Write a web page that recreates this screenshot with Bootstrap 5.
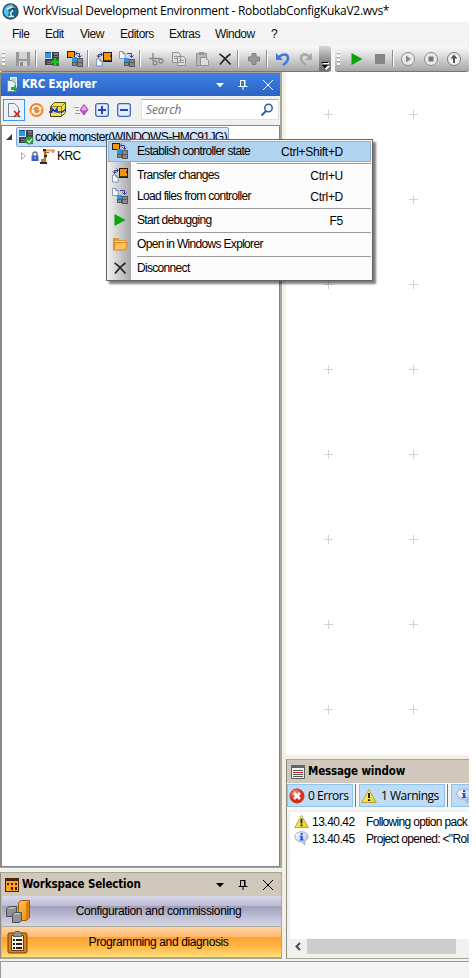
<!DOCTYPE html>
<html lang="en">
<head>
<meta charset="utf-8">
<title>WorkVisual Development Environment</title>
<link href="https://cdn.jsdelivr.net/npm/bootstrap@5.3.0/dist/css/bootstrap.min.css" rel="stylesheet">
<style>
body{background:#fff;margin:0;font-family:"Liberation Sans",Arial,sans-serif;font-size:12px;letter-spacing:-.68px;line-height:16px;color:#000;overflow:hidden}
svg{display:block;flex:none}
.app{width:469px;height:978px;overflow:hidden;background:#f3f0e5;white-space:nowrap}
.app>*{flex:none}
.titlebar{height:22px;background:#fff;font-family:"Open Sans","Noto Sans",sans-serif;font-size:12px;letter-spacing:-.3px;color:#000;padding-left:2px}
.menubar{height:24px;background:#f4f4f4;font-size:12px;letter-spacing:-.5px}
.menubar a{color:#111;text-decoration:none}
.m1{width:33px}.m2{width:35px}.m3{width:40px}.m4{width:49px}.m5{width:46px}.m6{width:56px}
.toolrow{height:26px;background:#f4f4f4}
.strip{height:26px;background:linear-gradient(#fbfbfb,#dedede 38%,#b8b8b8 80%,#a6a6a6);border-bottom:1px solid #777;border-radius:3px}
.strip svg.ic{margin:0 3px 0 4px}
.grip{width:3px;height:15px;background:repeating-linear-gradient(#fff 0 2px,#a0a0a0 2px 3px,transparent 3px 4px);margin:0 5px 0 2px}
.mainstrip{width:331px}
.mainstrip .grip{margin-right:6px}
.tsep{width:6px;height:17px;flex:none;border-left:1px solid #8d8d8d;position:relative;left:1px;box-shadow:inset 1px 0 #fff}
.ovf{width:12px;height:25px;background:linear-gradient(#d8d8d8,#8a8a8a 60%,#707070);border-radius:0 3px 3px 0}
.mainarea{height:887px}
.leftcol{width:282px}
.pane{border:1px solid #a9a596;border-left-color:#8f8d84}
.krc{height:796px;background:#f0f0f0;border-right-width:2px}
.phead{height:23px;font-family:"DejaVu Sans Condensed","DejaVu Sans",sans-serif;font-stretch:condensed;font-weight:700;font-size:11.5px;letter-spacing:-.15px}
.phead span{padding-bottom:1px}
.phead .ptitle{margin-left:3px}
.phead .ktitle{margin-left:1px}
.phead.act{background:linear-gradient(#3f80e6,#2a64c4);color:#fff}
.phead.idle{background:#cfc8bb;color:#000}
.hdrop{margin-right:13px}.hpin{margin-right:15px}.hcls{margin-right:7px}
.ktools{height:29px;padding:0 0 2px 2px}
.selbtn{width:22px;height:22px;border:1px solid #3397fc;background:#eaf2fb}
.kgem{margin-left:7px}
.kplus{margin-left:3px}
.search{width:138px;height:21px;background:#fff;border:1px solid #dfe2e8;border-top-color:#a9adb5;color:#6e6e6e;font-family:"Open Sans",sans-serif;font-style:italic;font-size:12px;letter-spacing:-.1px;margin-right:1px}
.tree{height:742px;background:#fff;border:1px solid #7f8498;font-size:12px}
.treesel{height:20px;width:213px;border:1px solid #7da2ce;border-radius:2px;background:linear-gradient(#dcebfc,#c1dbfc);margin-left:2px;padding-left:1px}
.treerow{margin-top:1px}
.treename{margin-left:1px;letter-spacing:-.58px}
.krcrow{padding-left:19px;height:18px}
.krcname{margin-left:1px;letter-spacing:-.6px}
.wsp{height:87px;margin-top:4px}
.wbtn{height:31px;border-bottom:1px solid #aaa79b;border-left:1px solid #bbb}
.wlab{padding-left:6px;letter-spacing:-.38px}
.w1{background:linear-gradient(#d9d9ea,#bdbcd6 32%,#a09eb8 33%,#c3c3da 75%,#d6d6e6)}
.w2{background:linear-gradient(#ffd5a4,#ffbb72 32%,#ff9f2e 33%,#ffbb4c 70%,#ffe07a)}
.rightcol{width:183px;margin-left:4px}
.canvasarea{height:683px;background:#fff}
.msg{height:200px;margin-top:4px;border-right:0;background:#f0f0f0;overflow:hidden}
.mtools{height:27px;background:#f6f6f6;font-family:"Open Sans",sans-serif;font-size:12px;letter-spacing:-.48px;padding-bottom:2px}
.mbtn{height:23px;background:#bfdcf4;border:1px solid #8dc3f3;flex:none}
.mbtn svg{margin-right:3px}
.errbtn{width:66px;padding-left:1px}
.wrnbtn{width:86px;padding-left:1px}
.wrnbtn svg{margin-right:4px}
.msep{width:1px;height:23px;background:#777;margin:0 3px 0 2px;flex:none}
.mlist{height:127px;margin:2px 0 0 3px;background:#fff;padding-top:1px}
.mrow{height:17px}
.mrow svg{margin:0 3px 0 4px}
.mtime{width:54px;letter-spacing:-.5px}
.hbar{height:15px;margin-left:3px}
.hthumb{width:149px;height:15px;background:#cdcdcd}
.statusbar{height:17px;margin-top:2px;background:#f4f4f4;border-top:1px solid #999;border-left:1px solid #999}
.ctx{position:absolute;left:106px;top:139px;width:267px;height:142px;border:1px solid #636363;background:linear-gradient(90deg,#f4f4f4,#d6d6d6 9px,#a8a8a8 24px,#fcfcfc 24px);box-shadow:3px 3px 2px rgba(0,0,0,.5);padding:1px}
.crow{height:21px;padding:0 27px 0 3px;border:1px solid transparent}
.crow.hot{background:#b0d3f0;border-color:#8fafd0}
.crow svg{margin:0 9px 1px 0}
.crow span{padding-bottom:2px}
.crow .key{letter-spacing:-.28px;padding-bottom:0}
.cline{height:1px;background:#9c9c9c;margin:1px 0 1px 29px}
</style>
<script src="https://cdn.jsdelivr.net/npm/bootstrap@5.3.0/dist/js/bootstrap.bundle.min.js"></script>
</head>
<body>
<svg width="0" height="0" class="position-absolute">
<defs>
<linearGradient id="gor" x2="1" y2="1"><stop stop-color="#ffc067"/><stop offset="1" stop-color="#f08a10"/></linearGradient>
<linearGradient id="gye" y2="1"><stop stop-color="#fff9a0"/><stop offset="1" stop-color="#eccb10"/></linearGradient>
<linearGradient id="gbl" x2="1" y2="1"><stop stop-color="#fff"/><stop offset="1" stop-color="#a9bde8"/></linearGradient>
<radialGradient id="grd" cx=".35" cy=".25"><stop stop-color="#ff9c80"/><stop offset="1" stop-color="#d92a14"/></radialGradient>
<symbol id="cabs" viewBox="0 0 16 16"><path fill="#3d4247" d="M1 8h8v6H1zM8 1h7v7H8z"/><path fill="#777b80" d="M10 2h4v2h-4zM10 5h4v1h-4zM3 10h5v1H3zM3 12h5v1H3z"/><path fill="#55595d" d="M9 8h6v7H9z"/><path fill="#2b96f2" d="M1 1h6v6H1z"/><path fill="#1c4f80" d="M1 1h6v1H1z"/></symbol>
<symbol id="add" viewBox="0 0 16 16"><use href="#cabs"/><path stroke="#17c817" stroke-width="2.400" d="M11 7v8M7 11h8"/></symbol>
<symbol id="est" viewBox="0 0 16 16"><path fill="#222" d="M0 0h8v7H0z"/><path fill="#f79400" d="M1 1h6v5H1z"/><path fill="#2b91ea" d="M5 6h5v5H5z"/><path fill="#55585c" d="M5 11h5v4H5zM10 7h6v9h-6z"/><path fill="#85888c" d="M11 8h4v3h-4zM11 12h4v3h-4zM6 12h3v2H6z"/><path fill="none" stroke="#383ca0" d="M9 2.500h3.500V6M10.500 4.500l2 2 2-2M10 .500l-2 2 2 2"/></symbol>
<symbol id="page" viewBox="0 0 8 9"><path fill="#f4f8ff" stroke="#718bb1" d="M.5.5h4l2.500 2.500v5.500H.5zM4.500.5V3H7"/></symbol>
<symbol id="tra" viewBox="0 0 16 16"><path fill="#1c1c1c" d="M7 1h9v10H7z"/><path fill="#f79400" d="M8 2h7v7H8z"/><path fill="#443a2c" d="M8 9h7v1H8zM14 4h1v2h-1z"/><use href="#page" y="7" width="7" height="9"/><path fill="none" stroke="#333b83" d="M2.500 6V3.500H6M4.500 1.500l2 2-2 2M1 4.500l1.500 2L4 4.500"/></symbol>
<symbol id="load" viewBox="0 0 16 16"><use href="#page" width="7" height="8"/><path fill="#2b91ea" d="M5 7h5v4H5z"/><path fill="#55585c" d="M5 11h5v4H5zM10 8h6v8h-6z"/><path fill="#85888c" d="M11 9h4v2h-4zM11 12h4v3h-4zM6 12h3v2H6z"/><path fill="none" stroke="#383ca0" d="M8 2.500h4.500V6M10.500 4.500l2 2 2-2"/></symbol>
<symbol id="exx" viewBox="0 0 16 16"><path fill="none" stroke="#222930" stroke-width="1.700" d="M2.500 3Q6 5 13.500 13.500M13.500 3Q9 6 3 13.500"/></symbol>
<symbol id="play" viewBox="0 0 16 16"><path fill="#0aa30a" d="M2.500 2v12l11-6z"/></symbol>
<symbol id="warn" viewBox="0 0 16 16"><path fill="url(#gye)" stroke="#b9a33a" stroke-linejoin="round" d="M8 1.500L15.300 14.500H.7z"/><path stroke="#222" stroke-width="2" d="M8 5v5M8 11.300v1.800"/></symbol>
<symbol id="info" viewBox="0 0 16 16"><path fill="url(#gbl)" stroke="#9da6bd" d="M8 .8c4 0 7 2.200 7 5.200 0 2-1.500 3.700-3.600 4.600L11.600 15l-3.800-3.700C3.700 11.300 1 9 1 6S4 .8 8 .8z"/><path fill="#1456d8" d="M7 2h2.300v2H7zM6 5h3.300v4h1v1H6V9h1V6H6z"/></symbol>
<symbol id="drop" viewBox="0 0 10 10"><path fill="currentColor" d="M1 3h8L5 7.300z"/></symbol>
<symbol id="pin" viewBox="0 0 10 10"><path fill="none" stroke="currentColor" d="M.5 6.500h9M2.500 6.500v-6h4v6M5 7v3"/><path fill="currentColor" d="M6 0h1.500v6H6z"/></symbol>
<symbol id="cls" viewBox="0 0 10 10"><path stroke="currentColor" d="M0 0l10 10M10 0L0 10"/></symbol>
</defs>
</svg>
<div class="app d-flex flex-column">
  <div class="titlebar d-flex align-items-center">
    <svg width="17" height="17" viewBox="0 0 17 17" class="me-1"><circle cx="8.500" cy="8.500" r="7.500" fill="#176b91" stroke="#354955" stroke-width="1.400"/><path fill="#58c2ef" d="M3 12a7 7 0 0 1 1-8.500 7 7 0 0 1 8-1L8 4.500 6 6.500l1 3-1 3 2 2C6 14.500 4 14 3 12z"/><path fill="none" stroke="#e6f5fb" stroke-width="1.400" d="M5 6l5-2 3 1M11 7L8.500 10l1 3M7 13.500h5"/><circle cx="11.500" cy="5.500" r="1.300" fill="#233844"/></svg>
    <span>WorkVisual Development Environment - RobotlabConfigKukaV2.wvs*</span>
  </div>
  <nav class="menubar d-flex align-items-center ps-2"><div class="d-flex ps-1"><a class="m1">File</a><a class="m2">Edit</a><a class="m3">View</a><a class="m4">Editors</a><a class="m5">Extras</a><a class="m6">Window</a><a>?</a></div></nav>
  <div class="toolrow d-flex">
    <div class="strip mainstrip d-flex align-items-center">
      <div class="grip"></div>
      <svg class="ic" width="16" height="16"><path fill="#999" d="M1 1h14v14H1z"/><path fill="#d4d4d4" d="M4 1h8v7H4zM4 10h8v5H4z"/><path fill="#8b8b8b" d="M5 11h3v4H5z"/></svg><i class="tsep"></i>
      <svg class="ic" width="16" height="16"><use href="#add"/></svg>
      <svg class="ic" width="16" height="16"><use href="#est"/></svg><i class="tsep"></i>
      <svg class="ic" width="16" height="16"><use href="#tra"/></svg>
      <svg class="ic" width="16" height="16"><use href="#load"/></svg><i class="tsep"></i>
      <svg class="ic" width="16" height="16"><path fill="none" stroke="#8b8b8b" stroke-width="1.500" d="M5 2v8M1 7.500h10l4 1"/><circle cx="7" cy="12" r="2" fill="none" stroke="#8b8b8b" stroke-width="1.300"/><circle cx="13" cy="10" r="2" fill="none" stroke="#8b8b8b" stroke-width="1.300"/></svg>
      <svg class="ic" width="16" height="16"><path fill="#ddd" stroke="#8f8f8f" d="M1.500 1.500h6l2 2v8h-8zM6.500 5.500h6l2 2v7h-8z"/><path stroke="#999" d="M3 5.500h3M3 7.500h3M8 9.500h5M8 11.500h5"/></svg>
      <svg class="ic" width="16" height="16"><path fill="#b8b8b8" stroke="#929292" d="M2.500 2.500h10v12h-10z"/><path fill="#999" d="M5 1h5v3H5z"/><path fill="#ddd" stroke="#929292" d="M6.500 6.500h5l3 3v5h-8z"/></svg>
      <svg class="ic" width="16" height="16"><use href="#exx"/></svg><i class="tsep"></i>
      <svg class="ic" width="16" height="16"><path fill="#999" stroke="#808080" d="M6 2.500h4V6h3.500v4H10v3.500H6V10H2.500V6H6z"/></svg><i class="tsep"></i>
      <svg class="ic" width="16" height="16"><path fill="none" stroke="#3f79dc" stroke-width="2.600" d="M4 6c4-4 9-3 9 1 0 3-2 5-5 7"/><path fill="#3f79dc" d="M1 2v7h7z"/></svg>
      <svg class="ic me-0" width="16" height="16"><path fill="none" stroke="#a6a6a6" stroke-width="2.400" d="M12 6C8 2 3 3 3 7c0 3 2 5 5 7"/><path fill="#a6a6a6" d="M14 2v7H7z"/></svg>
      <div class="ovf ms-auto"><svg width="12" height="25"><path stroke="#fff" d="M4 17.500h6"/><path stroke="#000" d="M3 16.500h6"/><path fill="#fff" d="M4 20h7l-3.500 4z"/><path fill="#000" d="M3 19h6l-3 3.500z"/></svg></div>
    </div>
    <div class="strip d-flex align-items-center flex-grow-1 ms-1">
      <div class="grip"></div>
      <svg class="ic" width="16" height="16"><use href="#play"/></svg>
      <svg class="ic" width="16" height="16"><path fill="#858585" d="M3 3h10v10H3z"/></svg><i class="tsep"></i>
      <svg class="ic" width="16" height="16"><circle cx="7" cy="8" r="6.500" fill="#e9e9e9" stroke="#8b8b8b"/><path fill="#888" d="M5 4.500v7l5-3.500z"/></svg>
      <svg class="ic" width="16" height="16"><circle cx="7" cy="8" r="6.500" fill="#e9e9e9" stroke="#8b8b8b"/><path fill="#777" d="M4.500 5.500h5v5h-5z"/></svg>
      <svg class="ic" width="16" height="16"><circle cx="7" cy="8" r="6.500" fill="#f1f1f1" stroke="#777"/><path fill="#555" d="M7 3.500l3.500 4H8V12H6V7.500H3.500z"/></svg>
    </div>
  </div>
  <div class="mainarea d-flex">
    <div class="leftcol">
      <section class="pane krc">
        <div class="phead act d-flex align-items-center">
          <svg width="16" height="16" class="ms-1"><path fill="#bed4da" stroke="#e8f2f4" d="M5.500.5h6v11h-6z"/><path fill="#e8f1ef" stroke="#7d9096" d="M2.500 3.500h5l3 3v8h-8z"/><path fill="#2fa83c" d="M6 10h3V8l3.500 3.500L9 15v-2H6z"/></svg>
          <span class="flex-grow-1 ktitle">KRC Explorer</span>
          <svg width="10" height="10" class="hdrop"><use href="#drop"/></svg><svg width="10" height="10" class="hpin"><use href="#pin"/></svg><svg width="10" height="10" class="hcls"><use href="#cls"/></svg>
        </div>
        <div class="ktools d-flex align-items-center">
          <span class="selbtn d-flex align-items-center justify-content-center"><svg width="16" height="16"><path fill="#eef1f4" stroke="#7d858c" d="M2.500 1.500h6l4 4v9h-10z"/><path stroke="#d31825" stroke-width="1.500" d="M8 9l6 6M14 9l-6 6"/></svg></span>
          <svg width="16" height="16" class="ms-1"><circle cx="7.500" cy="8" r="7" fill="#ed862d"/><path fill="none" stroke="#fff" stroke-width="1.600" d="M3.500 7.500C4 3 10 3 11 6.500M11.500 8.500C11 13 5 13 4 9.500"/><path fill="#fff" d="M12.500 4v4h-4zM2.500 12V8h4z"/></svg>
          <svg width="18" height="17" class="ms-1"><path fill="#f0e345" stroke="#4d4a18" d="M1.500 5.500l4-4h11v10l-4 4h-11z"/><path fill="none" stroke="#887b20" d="M1.500 5.500h11l4-4M12.500 5.500v10"/><path fill="none" stroke="#102fd0" stroke-width="1.500" d="M0 11h3V7.500l3 3 2-3V11h5l4-3"/></svg>
          <svg width="18" height="16" class="kgem"><path stroke="#999" d="M0 5.500h5M2 8.500h3M1 11.500h5"/><path fill="#c552c8" stroke="#8a288f" stroke-width=".7" d="M10 2.500L14 7.500 10 13 6 8z"/><path fill="#efa5ee" d="M10 3.500l3 4-3 1-3-.5z"/></svg>
          <svg width="14" height="14" class="kplus"><rect x=".7" y=".7" width="12.600" height="12.600" rx="2" fill="#e5f0ff" stroke="#3d63c4" stroke-width="1.300"/><path stroke="#2445b8" stroke-width="2" d="M7 3v8M3 7h8"/></svg>
          <svg width="14" height="14" class="ms-2"><rect x=".7" y=".7" width="12.600" height="12.600" rx="2" fill="#e5f0ff" stroke="#3d63c4" stroke-width="1.300"/><path stroke="#2445b8" stroke-width="2" d="M3 7h8"/></svg>
          <div class="search d-flex align-items-center justify-content-between ms-auto ps-1 pe-1"><span>Search</span><svg width="14" height="14"><circle cx="8.500" cy="5" r="3.700" fill="#f5f9fe" stroke="#2c5fa3" stroke-width="1.500"/><path stroke="#2c5fa3" stroke-width="2" d="M6 8l-4.500 4.500"/></svg></div>
        </div>
        <div class="tree">
          <div class="treerow d-flex align-items-center ps-1">
            <svg width="8" height="8"><path fill="#3b3b3b" d="M6 1v6H0z"/></svg>
            <div class="treesel d-flex align-items-center"><svg width="16" height="16" viewBox="0 0 16 16"><use href="#cabs"/><circle cx="11.500" cy="11.500" r="4" fill="#23a536"/><path fill="none" stroke="#fff" stroke-width="1.200" d="M9.500 11.500l1.500 1.800 3-3.500"/></svg><span class="treename">cookie monster(WINDOWS-HMC91JG)</span></div>
          </div>
          <div class="d-flex align-items-center krcrow">
            <svg width="6" height="9"><path fill="#fff" stroke="#aaa" d="M.5.5v7l4-3.500z"/></svg>
            <svg width="8" height="10" class="ms-1"><path fill="none" stroke="#4c65a2" stroke-width="1.300" d="M2 5V3q0-2 2-2t2 2v2"/><path fill="#3a60be" d="M.5 4.500h7V10h-7z"/><path fill="#c9daf9" d="M3.500 6h1v2h-1z"/></svg>
            <svg width="17" height="17"><path fill="none" stroke="#e89a50" stroke-width="2" d="M4 2.500h12"/><path stroke="#a5560d" d="M6 4.500h4M14 3v2"/><path fill="none" stroke="#c26d1c" stroke-width="2.500" d="M5.500 2l1 5-1 6"/><path fill="#2a2a2a" d="M4 1h3v2H4zM1 14h7v2H1zM5 7h3v2H5z"/><path fill="#ce741d" d="M2 11h5v3H2z"/></svg>
            <span class="krcname">KRC</span>
          </div>
        </div>
      </section>
      <section class="pane wsp">
        <div class="phead idle d-flex align-items-center">
          <svg width="14" height="14" class="ms-1"><path fill="#4b2503" d="M0 0h14v14H0z"/><path fill="#ffa02c" d="M1 3h12v10H1z"/><path fill="#422001" d="M2 5h2v2H2zM6 5h2v2H6zM10 5h2v2h-2zM6 9h2v3H6zM10 9h2v3h-2z"/></svg>
          <span class="flex-grow-1 ptitle">Workspace Selection</span>
          <svg width="10" height="10" class="hdrop"><use href="#drop"/></svg><svg width="10" height="10" class="hpin"><use href="#pin"/></svg><svg width="10" height="10" class="hcls me-2"><use href="#cls"/></svg>
        </div>
        <div class="wbtn w1 d-flex align-items-center ps-1">
          <svg width="24" height="24"><path fill="url(#gor)" stroke="#9d5b07" d="M12.500 3.500l3-2h8v17l-3 3h-8z"/><path fill="#db7c09" d="M20 4l3-2v16l-3 3z"/><path fill="#8d9193" stroke="#4c5052" d="M.5 9.500l3-2h7v8l-2 2h-8z"/><path fill="#b4b7b8" d="M1 10l3-2h6l-2 2z"/><path fill="#909496" stroke="#4c5052" d="M6.500 15.500l2-2h7v8l-2 2h-7z"/><path fill="#bdc0c1" d="M7 15.500l2-1.500h6l-2 1.500z"/></svg>
          <span class="flex-grow-1 text-center wlab">Configuration and commissioning</span>
        </div>
        <div class="wbtn w2 d-flex align-items-center ps-1">
          <svg width="24" height="24"><rect x="2" y="3" width="19" height="20" rx="1.500" fill="#d77e22" stroke="#6e3c0c"/><path fill="#fff1d6" stroke="#6e3c0c" d="M5.500 5.500h12v15h-12z"/><path fill="#8d9499" stroke="#596066" d="M7.500 4.500l2-3h4l2 3v2h-8z"/><path stroke="#222" stroke-width="2" d="M7 10h2M10 10h6M7 14h2M10 14h6M7 18h2M10 18h6"/></svg>
          <span class="flex-grow-1 text-center wlab">Programming and diagnosis</span>
        </div>
      </section>
    </div>
    <div class="rightcol">
      <div class="canvasarea"><svg width="183" height="683"><defs><pattern id="crosses" width="85" height="85" patternUnits="userSpaceOnUse"><path stroke="#d3d3d3" d="M38 42.500h9M42.500 38v9"/></pattern></defs><path fill="url(#crosses)" d="M0 0h183v683H0z"/></svg></div>
      <section class="pane msg">
        <div class="phead idle d-flex align-items-center"><svg width="14" height="14" class="ms-1"><path fill="#f4f4f4" stroke="#555e67" d="M.5.5h13v13H.5z"/><path fill="#5b6873" d="M0 0h14v3H0z"/><path stroke="#d22" d="M2 7.500h10"/><path stroke="#555" d="M2 5.500h10M2 9.500h10M2 11.500h10"/></svg><span class="ptitle">Message window</span></div>
        <div class="mtools d-flex align-items-center">
          <div class="mbtn d-flex align-items-center errbtn"><svg width="16" height="16"><circle cx="8" cy="8" r="7" fill="url(#grd)" stroke="#c43522"/><path stroke="#fff" stroke-width="2.600" d="M5 5l6 6M11 5l-6 6"/></svg>0 Errors</div>
          <i class="msep"></i>
          <div class="mbtn d-flex align-items-center wrnbtn"><svg width="16" height="16"><use href="#warn"/></svg>1 Warnings</div>
          <i class="msep"></i>
          <div class="mbtn d-flex align-items-center pe-3"><svg width="16" height="16" class="ms-1"><use href="#info"/></svg></div>
        </div>
        <div class="mlist">
          <div class="mrow d-flex align-items-center"><svg width="15" height="15"><use href="#warn"/></svg><span class="mtime">13.40.42</span><span>Following option pack</span></div>
          <div class="mrow d-flex align-items-center"><svg width="15" height="15"><use href="#info"/></svg><span class="mtime">13.40.45</span><span>Project opened: &lt;"Rol</span></div>
        </div>
        <div class="hbar d-flex align-items-center"><svg width="17" height="15"><path fill="none" stroke="#4c4c4c" stroke-width="2" d="M10 4L6.500 7.500 10 11"/></svg><div class="hthumb"></div></div>
      </section>
    </div>
  </div>
  <div class="statusbar"></div>
</div>
<div class="ctx">
  <div class="crow hot d-flex align-items-center"><svg width="16" height="16"><use href="#est"/></svg><span class="flex-grow-1">Establish controller state</span><span class="key">Ctrl+Shift+D</span></div>
  <div class="cline"></div>
  <div class="crow d-flex align-items-center"><svg width="16" height="16"><use href="#tra"/></svg><span class="flex-grow-1">Transfer changes</span><span class="key">Ctrl+U</span></div>
  <div class="crow d-flex align-items-center"><svg width="16" height="16"><use href="#load"/></svg><span class="flex-grow-1">Load files from controller</span><span class="key">Ctrl+D</span></div>
  <div class="cline"></div>
  <div class="crow d-flex align-items-center"><svg width="16" height="16"><use href="#play"/></svg><span class="flex-grow-1">Start debugging</span><span class="key">F5</span></div>
  <div class="cline"></div>
  <div class="crow d-flex align-items-center"><svg width="16" height="16"><path fill="#e8962a" d="M1 2h5l2 2h6v10H1z"/><path fill="#ffe0a0" d="M3 5h10v3H3z"/><path fill="#ffc05e" stroke="#d88420" d="M3.500 6.500h12l-2 7.500H1.500z"/></svg><span class="flex-grow-1">Open in Windows Explorer</span></div>
  <div class="cline"></div>
  <div class="crow d-flex align-items-center"><svg width="16" height="16"><use href="#exx"/></svg><span class="flex-grow-1">Disconnect</span></div>
</div>
</body>
</html>
